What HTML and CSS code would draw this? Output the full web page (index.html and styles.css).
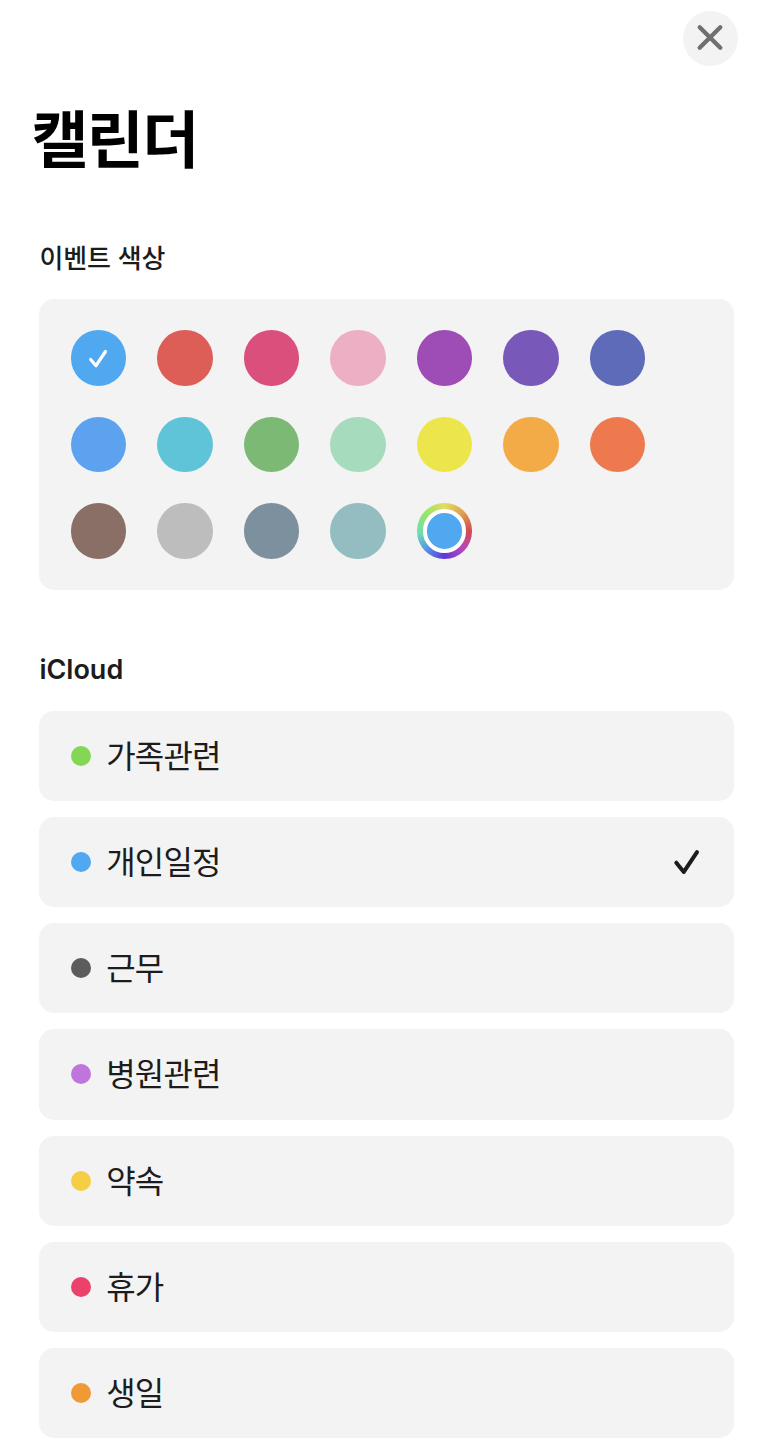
FILE: index.html
```
<!DOCTYPE html>
<html lang="ko">
<head>
    <meta charset="UTF-8">
    <meta name="viewport" content="width=device-width, initial-scale=1.0">
    <title>캘린더</title>
    <link rel="stylesheet" href="styles.css">
</head>
<body>
    <div class="sheet">
        <div class="top-bar">
            <button class="close-button" type="button" aria-label="닫기">
                <svg width="55" height="55" viewBox="0 0 55 55">
                    <path d="M16.7 16.2 L37.3 36.8 M37.3 16.2 L16.7 36.8"/>
                </svg>
            </button>
        </div>
        <h1>캘린더</h1>

        <h2 class="color-title">이벤트 색상</h2>
        <div class="color-box">
            <button type="button" class="color sky">
                <svg width="55" height="55" viewBox="0 0 55 55">
                    <path d="M19.7 29.5 L25 35.7 L34.5 21.5"/>
                </svg>
            </button>
            <button type="button" class="color red"></button>
            <button type="button" class="color rose"></button>
            <button type="button" class="color pink"></button>
            <button type="button" class="color purple"></button>
            <button type="button" class="color violet"></button>
            <button type="button" class="color indigo"></button>
            <button type="button" class="color blue"></button>
            <button type="button" class="color cyan"></button>
            <button type="button" class="color green"></button>
            <button type="button" class="color mint"></button>
            <button type="button" class="color yellow"></button>
            <button type="button" class="color orange"></button>
            <button type="button" class="color coral"></button>
            <button type="button" class="color brown"></button>
            <button type="button" class="color gray"></button>
            <button type="button" class="color slate"></button>
            <button type="button" class="color teal"></button>
            <button type="button" class="color custom"><span></span></button>
        </div>

        <h2 class="list-title">iCloud</h2>
        <ul class="calendar-list">
            <li><span class="dot family"></span><span class="name">가족관련</span></li>
            <li>
                <span class="dot personal"></span><span class="name">개인일정</span>
                <svg class="check" width="28" height="28" viewBox="0 0 28 28">
                    <path d="M3.3 14.7 L10.8 23.9 L24 4.1"/>
                </svg>
            </li>
            <li><span class="dot work"></span><span class="name">근무</span></li>
            <li><span class="dot hospital"></span><span class="name">병원관련</span></li>
            <li><span class="dot promise"></span><span class="name">약속</span></li>
            <li><span class="dot vacation"></span><span class="name">휴가</span></li>
            <li><span class="dot birthday"></span><span class="name">생일</span></li>
        </ul>
    </div>
</body>
</html>
```
FILE: styles.css
```
* {
    box-sizing: border-box;
}
body {
    margin: 0;
    background-color: #fff;
    color: #1c1c1c;
    font-family: Inter, "Noto Sans CJK KR", sans-serif;
}
.sheet {
    width: 773px;
    height: 1456px;
    padding: 10.5px 39.5px 0 39.4px;
    overflow: hidden;
}
.top-bar {
    display: flex;
    justify-content: flex-end;
    margin-right: -4px;
}
button {
    padding: 0;
    border: none;
    cursor: pointer;
}
svg {
    display: block;
    fill: none;
    stroke-linecap: round;
    stroke-linejoin: round;
}
.close-button {
    width: 55px;
    height: 55px;
    border-radius: 50%;
    background: #f3f3f3;
}
.close-button svg {
    stroke: #707070;
    stroke-width: 4.3;
}
h1 {
    height: 80px;
    margin: 35px 0 0 -8px;
    color: #000;
    font-size: 62px;
    font-weight: 700;
    line-height: 80px;
    letter-spacing: -1.6px;
}
h2 {
    height: 36px;
    margin: 0;
    font-size: 26px;
    font-weight: 500;
    line-height: 36px;
}
.color-title {
    margin-top: 60px;
    letter-spacing: -0.1px;
}
.color-box {
    display: grid;
    grid-template-columns: repeat(7, 55.5px);
    gap: 31px;
    height: 291px;
    margin-top: 22.5px;
    padding: 31px 31.2px;
    border-radius: 15px;
    background: #f3f3f3;
    align-content: start;
}
.color {
    width: 55.5px;
    height: 55.5px;
    border-radius: 50%;
}
.color svg {
    stroke: #fff;
    stroke-width: 3.2;
}
.sky { background: #50a8f1; }
.red { background: #dd5e57; }
.rose { background: #db4f7c; }
.pink { background: #edafc3; }
.purple { background: #9d4db5; }
.violet { background: #7858b9; }
.indigo { background: #5e6bb9; }
.blue { background: #5da2ee; }
.cyan { background: #60c4d9; }
.green { background: #7bb974; }
.mint { background: #a6dcbd; }
.yellow { background: #ece64c; }
.orange { background: #f3ab48; }
.coral { background: #ee794e; }
.brown { background: #896f66; }
.gray { background: #bdbdbd; }
.slate { background: #7c909d; }
.teal { background: #93bdc0; }
.custom {
    display: flex;
    align-items: center;
    justify-content: center;
    background: conic-gradient(#e4dc62, #dda052 45deg, #d44a50 90deg, #b846bd 135deg, #5d39d8 180deg, #5795e4 225deg, #70dcb6 265deg, #92e66b 310deg, #e4dc62);
}
.custom span {
    width: 43.5px;
    height: 43.5px;
    border: 4px solid #fff;
    border-radius: 50%;
    background: #50a8f1;
}
.list-title {
    margin-top: 62px;
    font-size: 27px;
    font-weight: 600;
}
.calendar-list {
    display: flex;
    flex-direction: column;
    gap: 16px;
    margin: 22.5px 0 0;
    padding: 0;
    list-style: none;
}
.calendar-list li {
    display: flex;
    align-items: center;
    height: 90.25px;
    padding: 0 33px 0 31.2px;
    border-radius: 15px;
    background: #f3f3f3;
}
.dot {
    width: 20px;
    height: 20px;
    margin-right: 15.6px;
    border-radius: 50%;
}
.name {
    padding-top: 2px;
    font-size: 32px;
    line-height: 44px;
    letter-spacing: -0.8px;
}
.check {
    margin-left: auto;
    stroke: #1c1c1c;
    stroke-width: 4;
}
.family { background: #83d754; }
.personal { background: #50a8f1; }
.work { background: #5c5c5c; }
.hospital { background: #bf75dc; }
.promise { background: #f6ce45; }
.vacation { background: #ea426a; }
.birthday { background: #ef9a36; }
```
